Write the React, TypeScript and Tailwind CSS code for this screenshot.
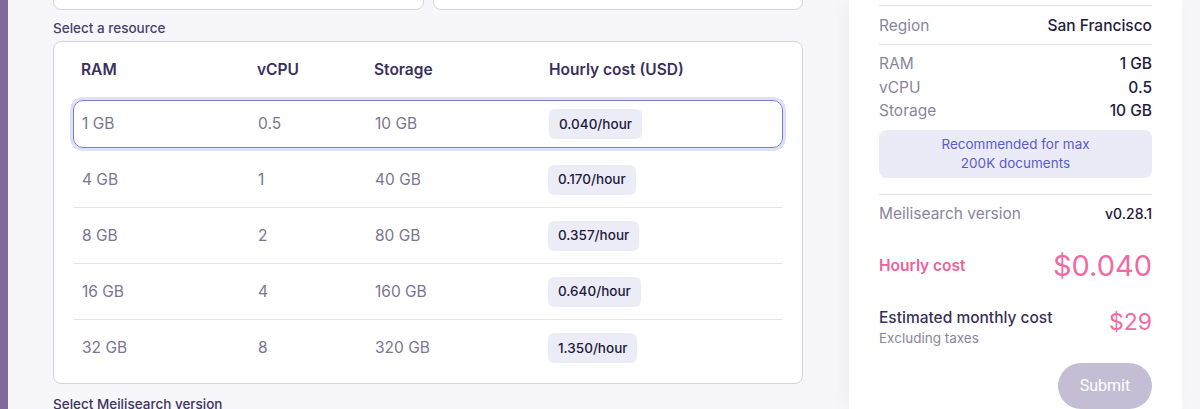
const rows = [
  { ram: "1 GB", cpu: "0.5", storage: "10 GB", cost: "0.040/hour" },
  { ram: "4 GB", cpu: "1", storage: "40 GB", cost: "0.170/hour" },
  { ram: "8 GB", cpu: "2", storage: "80 GB", cost: "0.357/hour" },
  { ram: "16 GB", cpu: "4", storage: "160 GB", cost: "0.640/hour" },
  { ram: "32 GB", cpu: "8", storage: "320 GB", cost: "1.350/hour" },
];

function App() {
  return (
    <main
      className="flex h-[409px] w-[1200px] overflow-hidden bg-[#f7f7fb] text-[#231c3d]"
      style={{ fontFamily: "Inter, 'Noto Sans', sans-serif" }}
    >
      {/* left accent bar */}
      <div className="w-[8px] shrink-0 bg-[#7f6b9c]" />

      {/* form column */}
      <section className="ml-[45px] flex w-[750px] shrink-0 flex-col [&>*]:shrink-0">
        <div className="-mt-[40px] flex gap-[9px]">
          <div className="h-[50px] flex-1 rounded-lg border border-[#d6d3de] bg-white" />
          <div className="h-[50px] flex-1 rounded-lg border border-[#d6d3de] bg-white" />
        </div>

        <p className="mt-[10px] text-[13.5px] font-medium leading-[16px] text-[#4a3f6b]">
          Select a resource
        </p>

        {/* resource table */}
        <div className="mt-[5px] h-[343px] rounded-lg border border-[#d6d3de] bg-white px-[19px]">
          <div className="grid h-[54px] grid-cols-[176px_117px_175px_1fr] items-center pl-[8px] pt-[2px] text-[15.5px] font-semibold text-[#3b2f5c]">
            <span>RAM</span>
            <span>vCPU</span>
            <span>Storage</span>
            <span>Hourly cost (USD)</span>
          </div>

          {rows.map((r, i) => (
            <div
              key={r.ram}
              className={
                i === 0 || i === rows.length - 1
                  ? "flex h-[56px] items-center"
                  : "flex h-[56px] items-center border-b border-[#e8e6ee]"
              }
            >
              <div
                className={
                  i === 0
                    ? "grid h-[48px] w-full grid-cols-[176px_117px_175px_1fr] items-center rounded-[10px] border border-[#7b7dd4] pl-[8px] text-[15.5px] text-[#7a7590] ring-[3px] ring-[#dfe0fa]"
                    : "grid h-[48px] w-full grid-cols-[176px_117px_175px_1fr] items-center pl-[9px] text-[15.5px] text-[#7a7590]"
                }
              >
                <span>{r.ram}</span>
                <span>{r.cpu}</span>
                <span>{r.storage}</span>
                <span className={i === 0 ? "-ml-[1px]" : "-ml-[2px]"}>
                  <span className="inline-flex h-[30px] items-center rounded-md bg-[#ececf6] px-[10px] text-[13.5px] font-medium text-[#221a3c]">
                    {r.cost}
                  </span>
                </span>
              </div>
            </div>
          ))}
        </div>

        <p className="mt-[12px] text-[13.5px] font-medium leading-[16px] text-[#3f3560]">
          Select Meilisearch version
        </p>
      </section>

      {/* summary panel */}
      <aside className="ml-[46px] flex w-[333px] shrink-0 flex-col bg-white px-[30px] shadow-[-6px_0_14px_rgba(120,110,160,0.06)] [&>*]:shrink-0">
        <div className="h-[6px] border-b border-[#e6e4ec]" />

        <div className="flex h-[39px] items-center justify-between border-b border-[#e6e4ec] pt-[2px] text-[15.5px]">
          <span className="text-[#8a859c]">Region</span>
          <span className="font-medium text-[#231c3d]">San Francisco</span>
        </div>

        <div className="mt-[7px] flex flex-col text-[15.5px] leading-[23.5px]">
          <div className="flex justify-between">
            <span className="text-[#8a859c]">RAM</span>
            <span className="font-medium">1 GB</span>
          </div>
          <div className="flex justify-between">
            <span className="text-[#8a859c]">vCPU</span>
            <span className="font-medium">0.5</span>
          </div>
          <div className="flex justify-between">
            <span className="text-[#8a859c]">Storage</span>
            <span className="font-medium">10 GB</span>
          </div>
        </div>

        <div className="mt-[7px] flex h-[48px] flex-col items-center justify-center rounded-lg bg-[#ebebf8] text-center text-[13.5px] leading-[19px] text-[#5b5bc7]">
          <span>Recommended for max</span>
          <span>200K documents</span>
        </div>

        <div className="mt-[16px] border-b border-[#e6e4ec]" />

        <div className="mt-[7px] flex items-center justify-between">
          <span className="text-[15.5px] text-[#8a859c]">Meilisearch version</span>
          <span className="text-[14px] font-medium text-[#1e1737]">v0.28.1</span>
        </div>

        <div className="mt-[24px] flex items-center justify-between">
          <span className="text-[15.5px] font-semibold text-[#f0609c]">Hourly cost</span>
          <span className="text-[29px] leading-[34px] text-[#f06ba3]">$0.040</span>
        </div>

        <div className="mt-[25px] flex items-start justify-between">
          <div className="flex flex-col">
            <span className="text-[15.5px] font-medium leading-[20px] text-[#3b3058]">
              Estimated monthly cost
            </span>
            <span className="text-[13.5px] leading-[20px] text-[#8a859c]">Excluding taxes</span>
          </div>
          <span className="text-[23px] leading-[28px] text-[#f06ba3]">$29</span>
        </div>

        <div className="mt-[15px] flex justify-end">
          <button
            type="button"
            className="h-[46px] w-[94px] rounded-full bg-[#c5bdd3] text-[16px] text-white"
            style={{ fontFamily: "Roboto, sans-serif" }}
          >
            Submit
          </button>
        </div>
      </aside>
    </main>
  );
}

export default App;
